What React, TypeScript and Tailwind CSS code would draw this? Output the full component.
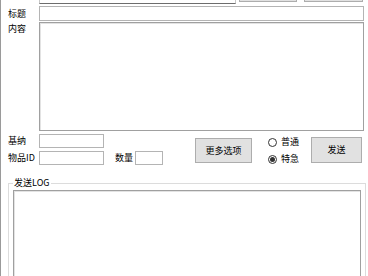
import React from "react";

const FONT = {
  fontFamily: '"Noto Sans CJK SC", "Noto Sans", "Liberation Sans", sans-serif',
};

function Radio({ label, checked }: { label: string; checked?: boolean }) {
  return (
    <div className="flex h-[12px] items-center gap-[4px]">
      <span className="flex h-[9px] w-[9px] items-center justify-center rounded-full border border-[#333333] bg-white">
        {checked && <span className="h-[5px] w-[5px] rounded-full bg-[#333333]" />}
      </span>
      <span className="text-[9px] leading-[12px] text-black">{label}</span>
    </div>
  );
}

function Btn({ children, className }: { children?: string; className: string }) {
  return (
    <button
      type="button"
      className={`flex items-center justify-center border border-[#adadad] bg-[#e1e1e1] text-[9px] text-black ${className}`}
    >
      {children}
    </button>
  );
}

export default function App() {
  const box = "border border-[#b4b4b4] bg-white";
  const area =
    "resize-none border border-[#a0a0a0] bg-white shadow-[inset_1px_1px_0_#e3e3e3] outline-none";

  return (
    <div
      className="h-[276px] w-[368px] overflow-hidden border-l border-[#9a9a9a] bg-white text-black"
      style={FONT}
    >
      {/* top row, mostly scrolled out of view */}
      <div className="flex h-[4px] items-end">
        <input
          readOnly
          className="ml-[38px] h-[20px] w-[197px] border border-[#c8c8c8] border-b-[#6d6d6d] bg-white"
        />
        <Btn className="mb-[2px] ml-[3px] h-[20px] w-[58px]" />
        <Btn className="mb-[2px] ml-[7px] h-[20px] w-[59px]" />
      </div>

      {/* 标题 */}
      <div className="mt-[2px] flex h-[15px] items-center pl-[7px]">
        <span className="w-[31px] text-[9px] leading-[12px]">标题</span>
        <input readOnly className={`h-[15px] w-[325px] ${box}`} />
      </div>

      {/* 内容 */}
      <div className="mt-[1px] flex items-start pl-[7px]">
        <span className="w-[31px] pt-[1px] text-[9px] leading-[12px]">内容</span>
        <textarea readOnly className={`h-[109px] w-[325px] ${area}`} />
      </div>

      {/* 物品 */}
      <div className="mt-[3px] flex items-start pl-[7px]">
        <div className="flex flex-col gap-[3px]">
          <div className="flex h-[14px] items-center">
            <span className="w-[31px] text-[9px] leading-[12px]">基纳</span>
            <input readOnly className={`h-[14px] w-[65px] ${box}`} />
          </div>
          <div className="flex h-[14px] items-center">
            <span className="w-[31px] text-[9px] leading-[12px]">物品ID</span>
            <input readOnly className={`h-[14px] w-[65px] ${box}`} />
            <span className="ml-[11px] w-[20px] text-[9px] leading-[12px]">数量</span>
            <input readOnly className={`h-[14px] w-[28px] ${box}`} />
          </div>
        </div>
        <Btn className="ml-[32px] mt-[4px] h-[25px] w-[57px]">更多选项</Btn>
        <div className="ml-[16px] mt-[2px] flex w-[43px] flex-col gap-[5px]">
          <Radio label="普通" />
          <Radio label="特急" checked />
        </div>
        <Btn className="mt-[3px] h-[26px] w-[51px]">发送</Btn>
      </div>

      {/* 发送LOG */}
      <fieldset className="ml-[7px] mt-[12px] w-[358px] border border-[#dcdcdc] px-[4px]">
        <legend className="px-[1px] text-[9px] leading-[12px]">发送LOG</legend>
        <textarea readOnly className={`mt-[1px] block h-[100px] w-[348px] ${area}`} />
      </fieldset>
    </div>
  );
}
